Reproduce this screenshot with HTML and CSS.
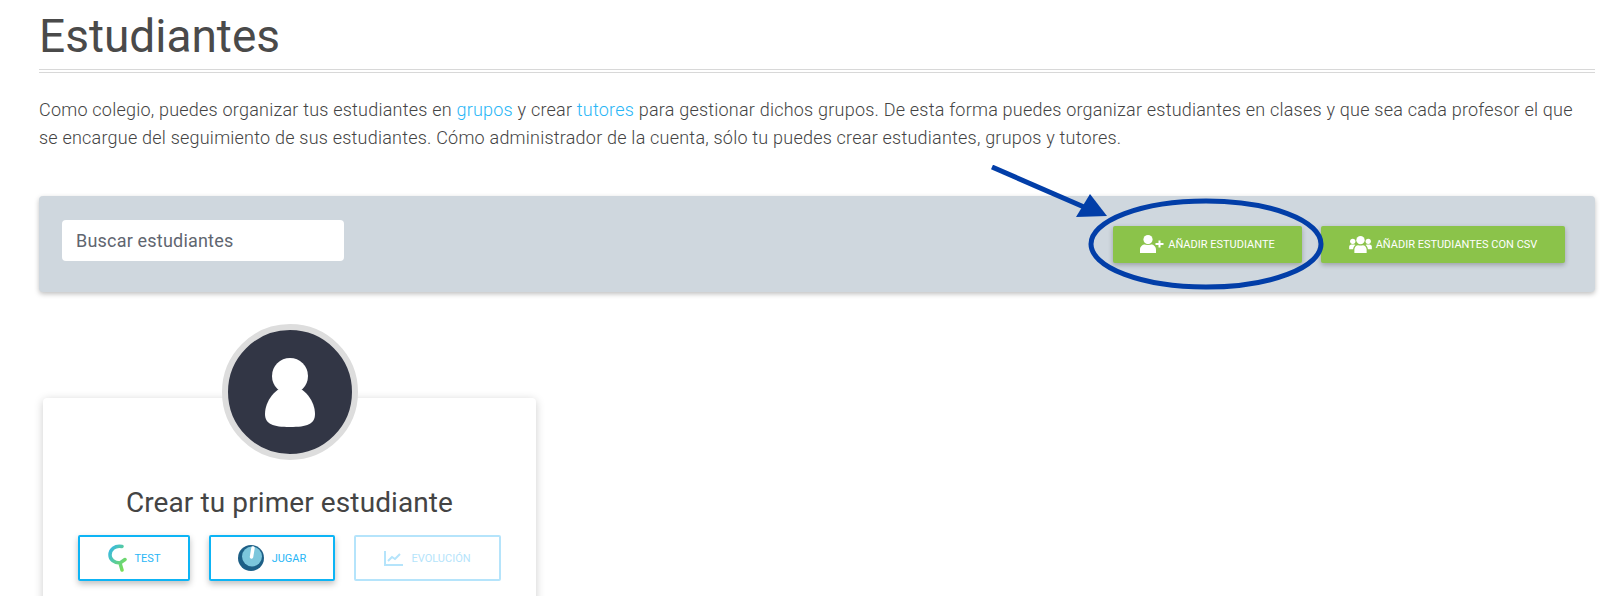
FILE: index.html
```html
<!DOCTYPE html>
<html lang="es">

<head>
    <meta charset="UTF-8">
    <title>Estudiantes</title>
    <link rel="stylesheet" href="styles.css">
</head>

<body>
    <main class="page">
        <h1 class="title">Estudiantes</h1>

        <p class="intro">Como colegio, puedes organizar tus estudiantes en <a href="#">grupos</a> y crear <a href="#">tutores</a> para gestionar dichos grupos. De esta forma puedes organizar estudiantes en clases y que sea cada profesor el que se encargue del seguimiento de sus estudiantes. Cómo administrador de la cuenta, sólo tu puedes crear estudiantes, grupos y tutores.</p>

        <div class="toolbar">
            <input class="search" type="text" placeholder="Buscar estudiantes">
            <div class="toolbar-actions">
                <a href="#" class="btn-green btn-add">
                    <svg width="24" height="18" viewBox="0 0 24 18" fill="#fff">
                        <circle cx="8" cy="4.6" r="4.6" />
                        <path d="M0 18v-3.2C0 11.6 2.4 9.6 5 9.6c1 .6 5 .6 6 0 2.6 0 5 2 5 5.200V18z" />
                        <path d="M18.500 5.500h2v2.500H23.500v2h-3v2.500h-2v-2.500h-3V8h3z" />
                    </svg>
                    Añadir estudiante
                </a>
                <a href="#" class="btn-green btn-csv">
                    <svg width="23" height="17" viewBox="0 0 24 18" fill="#fff">
                        <circle cx="12" cy="4.4" r="4.4" />
                        <circle cx="3.8" cy="5.6" r="2.8" />
                        <circle cx="20.2" cy="5.6" r="2.8" />
                        <path d="M5.5 18v-3.6c0-2.6 2-4.6 4-4.6 1 .5 4 .5 5 0 2 0 4 2 4 4.600V18z" />
                        <path d="M0 14v-2.600C0 10 1.200 9 2.400 9h3c.5 0 1 .2 1.300.5-1.500 1-2.500 2.800-2.500 4.500z" />
                        <path d="M24 14v-2.600C24 10 22.800 9 21.600 9h-3c-.5 0-1 .2-1.300.5 1.500 1 2.500 2.800 2.500 4.500z" />
                    </svg>
                    Añadir estudiantes con CSV
                </a>
            </div>
        </div>

        <section class="card-wrap">
            <div class="avatar">
                <svg width="50" height="69" viewBox="0 0 50 69" fill="#fff">
                    <circle cx="25" cy="18" r="18" />
                    <path d="M25 28C10 28 0 44 0 56c0 10 8 13 25 13s25-3 25-13C50 44 40 28 25 28z" />
                </svg>
            </div>
            <div class="card">
                <h2 class="card-title">Crear tu primer estudiante</h2>
                <div class="card-actions">
                    <a href="#" class="btn-outline btn-test">
                        <svg width="19" height="28" viewBox="0 0 19 28" fill="none" stroke-width="3.500" stroke-linecap="round">
                            <defs>
                                <linearGradient id="testGrad" x1="0" y1="0" x2="1" y2="1">
                                    <stop offset="0" stop-color="#35b8e8" />
                                    <stop offset="1" stop-color="#7fe04a" />
                                </linearGradient>
                            </defs>
                            <path d="M14 2.500C7 1 2 5.500 2 11c0 4.500 4 8 10 8l5-3.500M12 19l2 7" stroke="url(#testGrad)" />
                        </svg>
                        Test
                    </a>
                    <a href="#" class="btn-outline btn-play">
                        <svg width="26" height="26" viewBox="0 0 26 26">
                            <circle cx="13" cy="13" r="13" fill="#1d5f86" />
                            <circle cx="14" cy="11.500" r="10" fill="#7cc6dc" />
                            <path d="M15 3l-1.500 9" stroke="#fff" stroke-width="3.500" stroke-linecap="round" />
                        </svg>
                        Jugar
                    </a>
                    <a href="#" class="btn-outline btn-stats">
                        <svg width="19" height="15" viewBox="0 0 19 15" fill="none" stroke="#b5e4fb" stroke-width="2">
                            <path d="M1 0v14h18" />
                            <path d="M4 10l4-4 3 2 5-5" />
                        </svg>
                        Evolución
                    </a>
                </div>
            </div>
        </section>

        <svg class="callout" width="340" height="135" viewBox="0 0 340 135">
            <path d="M2 2L94 42" stroke="#023ea8" stroke-width="5" />
            <path d="M86 52L100 29L117 51z" fill="#023ea8" />
            <ellipse cx="216" cy="79" rx="115" ry="43" fill="none" stroke="#023ea8" stroke-width="5" />
        </svg>
    </main>
</body>

</html>
```

FILE: styles.css
```css
* {
    box-sizing: border-box;
}

html,
body {
    height: 100%;
}

body {
    margin: 0;
    overflow: hidden;
    background: #fff;
    color: #444;
    font-family: "Roboto", "Noto Sans", sans-serif;
}

a {
    text-decoration: none;
}

.page {
    position: relative;
    height: 596px;
    overflow: hidden;
    padding: 0 5px 0 39px;
}

.title {
    margin: 0;
    height: 73px;
    padding-top: 8px;
    border-bottom: 4px double #d8d8d8;
    font-size: 46px;
    line-height: 56px;
    font-weight: 400;
    color: #4a4a4a;
}

.intro {
    max-width: 1545px;
    margin: 23px 0 0;
    font-size: 18px;
    line-height: 28px;
    font-weight: 300;
    letter-spacing: 0.22px;
    color: #444;
}

.intro a {
    color: #29b6f6;
}

.toolbar {
    display: flex;
    align-items: center;
    justify-content: space-between;
    height: 96px;
    margin-top: 44px;
    padding: 0 30px 0 23px;
    background: #cfd7de;
    border-radius: 4px;
    box-shadow: 0 2px 5px rgba(0, 0, 0, 0.25);
}

.search {
    width: 282px;
    height: 41px;
    margin-bottom: 8px;
    padding: 0 14px;
    border: 0;
    border-radius: 4px;
    background: #fff;
    font-family: inherit;
    font-size: 18px;
    letter-spacing: 0.2px;
}

.search::placeholder {
    color: #5f6670;
    opacity: 1;
}

.toolbar-actions {
    display: flex;
    gap: 19px;
}

.btn-green {
    display: flex;
    align-items: center;
    justify-content: center;
    gap: 4px;
    height: 37px;
    border-radius: 2px;
    background: #8bc34a;
    color: #fff;
    font-size: 11px;
    font-weight: 400;
    text-transform: uppercase;
    box-shadow: 0 2px 5px rgba(0, 0, 0, 0.25);
}

.btn-add {
    width: 189px;
}

.btn-csv {
    width: 244px;
}

.card-wrap {
    display: flex;
    flex-direction: column;
    align-items: center;
    width: 493px;
    margin: 32px 0 0 4px;
}

.avatar {
    position: relative;
    z-index: 1;
    display: flex;
    align-items: center;
    justify-content: center;
    width: 136px;
    height: 136px;
    margin-bottom: -62px;
    border: 6px solid #ddd;
    border-radius: 50%;
    background: #323645;
}

.card {
    width: 100%;
    height: 300px;
    padding-top: 87px;
    border-radius: 4px;
    background: #fff;
    box-shadow: 0 2px 10px rgba(0, 0, 0, 0.2);
}

.card-title {
    margin: 0;
    text-align: center;
    font-size: 28px;
    line-height: 36px;
    font-weight: 400;
    letter-spacing: 0.1px;
    color: #444;
}

.card-actions {
    display: flex;
    gap: 19px;
    margin: 14px 0 0 35px;
}

.btn-outline {
    display: flex;
    align-items: center;
    justify-content: center;
    gap: 8px;
    height: 46px;
    border: 2px solid #0db4f5;
    border-radius: 2px;
    color: #29b6f6;
    font-size: 11px;
    font-weight: 400;
    text-transform: uppercase;
    box-shadow: 0 3px 6px rgba(0, 0, 0, 0.25);
}

.btn-test {
    width: 112px;
}

.btn-play {
    width: 126px;
}

.btn-stats {
    width: 147px;
    border-color: #b5e4fb;
    color: #b5e4fb;
    box-shadow: none;
}

.callout {
    position: absolute;
    left: 990px;
    top: 165px;
}
```
